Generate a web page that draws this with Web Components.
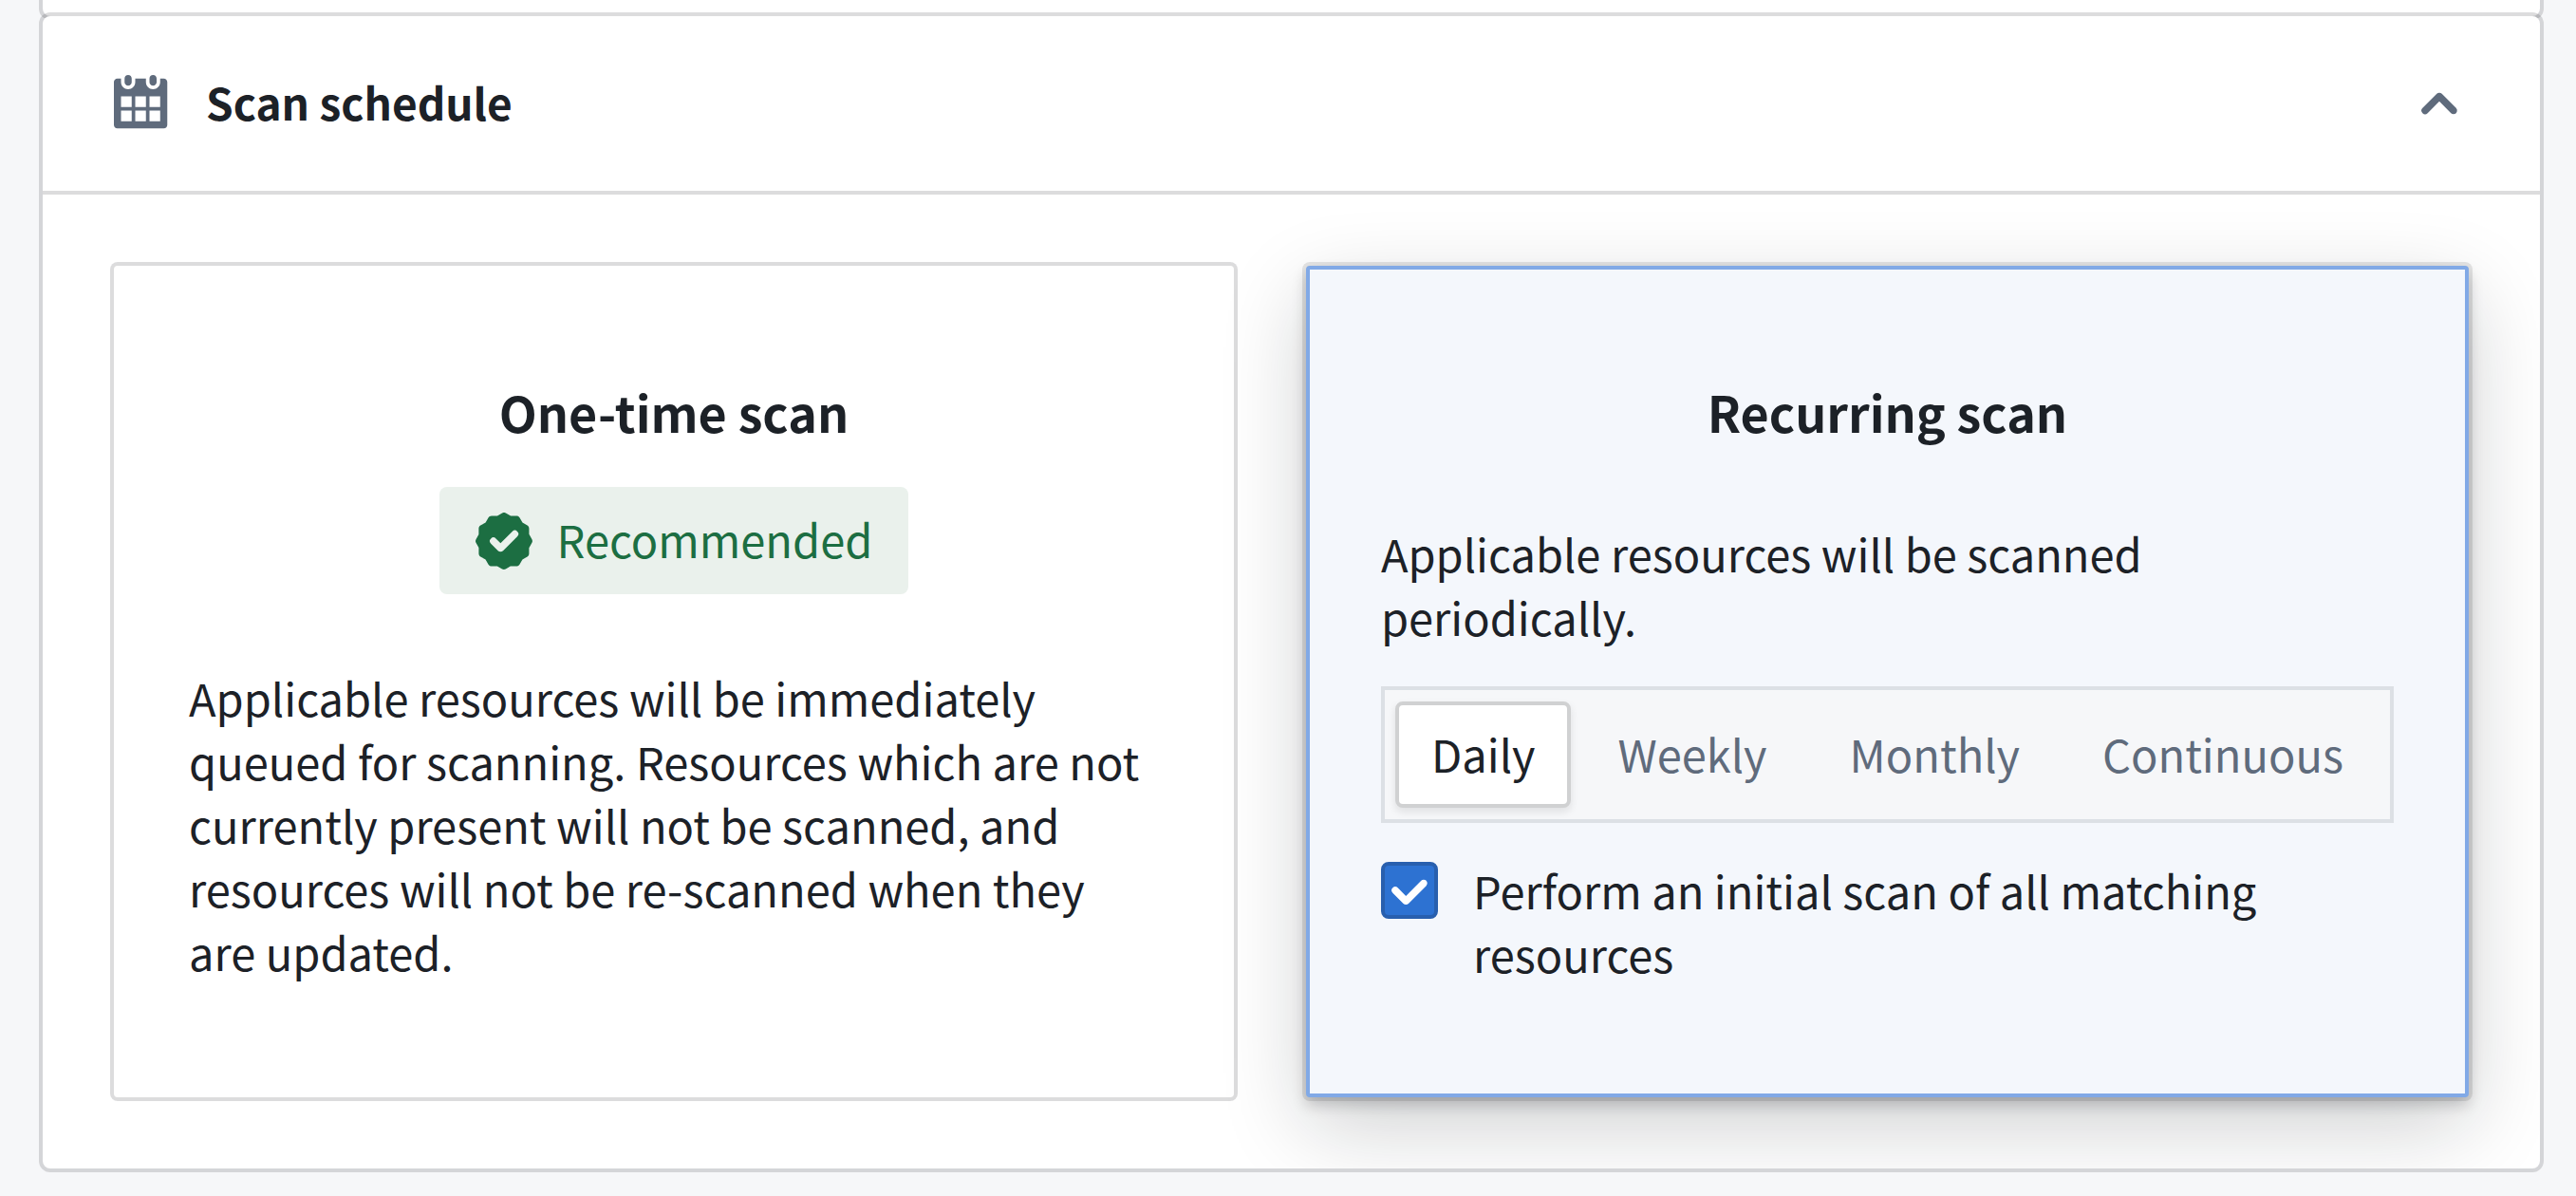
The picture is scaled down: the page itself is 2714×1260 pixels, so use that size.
<!DOCTYPE html>
<html lang="en">
<head>
<meta charset="utf-8">
<title>Scan schedule</title>
<style>
:root{
  --font:"Noto Sans CJK JP","Noto Sans CJK SC",sans-serif;
  --text:#1c2127;--muted:#5f6b7c;--bg:#f6f7f9;
  --size-body:47px;--size-section:46px;--size-title:52px;--line:67px;
  --ring:0 0 0 4px rgba(17,20,24,0.15);
}
html{background:var(--bg)}
body{margin:0;padding:0 38px 25px 45px;font-family:var(--font);font-size:var(--size-body);line-height:var(--line);color:var(--text)}
</style>
</head>
<body>

<form-panel></form-panel>

<collapse-section heading="Scan schedule">
  <option-card heading="One-time scan">
    <recommended-tag slot="tag">Recommended</recommended-tag>
    Applicable resources will be immediately queued for scanning. Resources which are not currently present will not be scanned, and resources will not be re-scanned when they are updated.
  </option-card>
  <option-card heading="Recurring scan" selected>
    Applicable resources will be scanned periodically.
    <segmented-control slot="controls" options="Daily,Weekly,Monthly,Continuous" value="Daily"></segmented-control>
    <check-field slot="controls">Perform an initial scan of all matching resources</check-field>
  </option-card>
</collapse-section>

<script>
const RESET = '*,*::before,*::after{box-sizing:border-box;margin:0;padding:0}';

// Tail of the panel that sits above the schedule section
class FormPanel extends HTMLElement {
  constructor() {
    super();
    this.attachShadow({ mode: 'open' });
  }

  connectedCallback() {
    this.shadowRoot.innerHTML = `
      <style>
:host{display:block;min-height:17px;background:#fff;border-radius:0 0 8px 8px;box-shadow:var(--ring)}
      </style>
      <slot></slot>
    `;
  }
}

class CollapseSection extends HTMLElement {
  constructor() {
    super();
    this.attachShadow({ mode: 'open' });
  }

  connectedCallback() {
    this.shadowRoot.innerHTML = `
      <style>
${RESET}
:host{display:block;background:#fff;border-radius:8px;box-shadow:var(--ring)}
.header{
  display:flex;align-items:center;justify-content:space-between;width:100%;
  padding:57px 76px 57px 75px;border:0;border-bottom:4px solid #dcdcdd;
  background:none;font:inherit;color:inherit;text-align:left;cursor:pointer;
}
.label{display:flex;align-items:center;gap:37px}
h2{padding-bottom:3px;font-size:var(--size-section);font-weight:700;line-height:var(--line)}
svg{display:block;width:60px;height:60px;fill:var(--muted)}
.body{display:grid;grid-template-columns:1180fr 1225fr;gap:76px;padding:75px;overflow:hidden;border-radius:0 0 8px 8px}
.body[hidden]{display:none}
      </style>
      <button class="header" type="button" aria-expanded="true" aria-controls="body">
        <span class="label">
          <svg viewBox="0 0 16 16" aria-hidden="true"><path fill-rule="evenodd" d="M11 3c.6 0 1-.5 1-1V1c0-.6-.4-1-1-1s-1 .4-1 1v1c0 .5.4 1 1 1zm3-2h-1v1c0 1.1-.9 2-2 2s-2-.9-2-2V1H6v1c0 1.1-.9 2-2 2s-2-.9-2-2V1H1c-.6 0-1 .5-1 1v12c0 .6.4 1 1 1h13c.6 0 1-.4 1-1V2c0-.6-.5-1-1-1zM5 13H2v-3h3v3zm0-4H2V6h3v3zm4 4H6v-3h3v3zm0-4H6V6h3v3zm4 4h-3v-3h3v3zm0-4h-3V6h3v3zM4 3c.6 0 1-.5 1-1V1c0-.6-.4-1-1-1S3 .4 3 1v1c0 .5.4 1 1 1z"/></svg>
          <h2>${this.getAttribute('heading')}</h2>
        </span>
        <svg viewBox="0 0 16 16" aria-hidden="true"><path d="M12.71 9.29l-4-4C8.53 5.11 8.28 5 8 5s-.53.11-.71.29l-4 4a1.003 1.003 0 001.42 1.42L8 7.41l3.29 3.29c.18.19.43.3.71.3a1.003 1.003 0 00.71-1.71z"/></svg>
      </button>
      <div class="body" id="body"><slot></slot></div>
    `;

    const header = this.shadowRoot.querySelector('.header');
    const body = this.shadowRoot.querySelector('.body');
    header.addEventListener('click', () => {
      body.hidden = !body.hidden;
      header.setAttribute('aria-expanded', String(!body.hidden));
    });
  }
}

class OptionCard extends HTMLElement {
  constructor() {
    super();
    this.attachShadow({ mode: 'open' });
  }

  connectedCallback() {
    this.shadowRoot.innerHTML = `
      <style>
${RESET}
:host{
  display:flex;flex-direction:column;padding:110px 75px 114px;
  border:4px solid transparent;border-radius:4px;box-shadow:var(--ring);
}
:host([selected]){
  background:#f4f7fc;border-color:#81a9e6;
  box-shadow:0 0 0 4px rgba(17,20,24,0.1),0 8px 15px rgba(17,20,24,0.2),0 30px 90px rgba(17,20,24,0.2);
}
h3{font-size:var(--size-title);font-weight:700;line-height:80px;text-align:center}
.tag{display:flex;justify-content:center;margin-top:39px}
:host([selected]) .tag{display:none}
.text{margin-top:75px}
.controls{display:flex;flex-direction:column;gap:37px;margin-top:40px}
:host(:not([selected])) .controls{display:none}
      </style>
      <h3>${this.getAttribute('heading')}</h3>
      <div class="tag"><slot name="tag"></slot></div>
      <p class="text"><slot></slot></p>
      <div class="controls"><slot name="controls"></slot></div>
    `;
  }
}

class RecommendedTag extends HTMLElement {
  constructor() {
    super();
    this.attachShadow({ mode: 'open' });
  }

  connectedCallback() {
    this.shadowRoot.innerHTML = `
      <style>
:host{
  display:inline-flex;align-items:center;gap:26px;height:113px;padding:0 38px;box-sizing:border-box;
  border-radius:8px;background:#eaf1ec;color:#1c6e42;
}
svg{display:block;width:60px;height:60px;fill:currentColor}
span{padding-bottom:4px}
      </style>
      <svg viewBox="0 0 16 16" aria-hidden="true"><path d="M15.86 7.5l-.81-1.42V4.5c0-.36-.19-.68-.49-.87l-1.37-.8-.81-1.41c-.19-.31-.51-.49-.86-.49H9.89L8.5.14a.948.948 0 00-1 0L6.13.93H4.5c-.36 0-.68.19-.87.49l-.8 1.37-1.44.83c-.3.19-.49.51-.49.87v1.65L.13 7.5c-.17.31-.17.68 0 .99l.78 1.38v1.65c0 .36.19.68.49.87l1.42.81.8 1.37c.19.31.51.49.87.49H6.1l1.38.8c.31.17.68.17.99 0l1.35-.8h1.68c.36 0 .68-.19.87-.49l.81-1.37 1.37-.8c.31-.19.49-.51.49-.87V9.93l.81-1.44c.17-.31.17-.68.01-.99zm-4.12-.77l-4 3.99c-.18.18-.43.29-.71.29s-.53-.11-.71-.29l-2-1.99a1.003 1.003 0 011.42-1.42l1.29 1.29 3.29-3.29a1.003 1.003 0 011.42 1.42z"/></svg>
      <span><slot></slot></span>
    `;
  }
}

class SegmentedControl extends HTMLElement {
  constructor() {
    super();
    this.attachShadow({ mode: 'open' });
  }

  connectedCallback() {
    const value = this.getAttribute('value');
    const buttons = this.getAttribute('options').split(',').map(option =>
      `<button type="button" aria-pressed="${option === value}">${option}</button>`
    ).join('');

    this.shadowRoot.innerHTML = `
      <style>
:host{display:flex;gap:11px;padding:12px 11px;border:4px solid #dce0e5;background:var(--bg)}
button{
  height:112px;margin:0;padding:0 34px 4px;border:4px solid transparent;border-radius:8px;
  background:none;font:inherit;color:var(--muted);cursor:pointer;
}
button[aria-pressed="true"]{
  background:#fff;border-color:#d0d1d2;color:var(--text);
  box-shadow:0 4px 8px rgba(17,20,24,0.1);
}
      </style>
      ${buttons}
    `;

    this.shadowRoot.addEventListener('click', e => {
      if (!e.target.matches('button')) return;
      this.shadowRoot.querySelectorAll('button').forEach(b =>
        b.setAttribute('aria-pressed', String(b === e.target)));
    });
  }
}

class CheckField extends HTMLElement {
  constructor() {
    super();
    this.attachShadow({ mode: 'open' });
  }

  connectedCallback() {
    this.shadowRoot.innerHTML = `
      <style>
:host{display:block}
label{display:flex;align-items:flex-start;gap:37px;cursor:pointer}
.box{display:grid;flex:none;margin-top:4px}
.box > *{grid-area:1/1;width:60px;height:60px;margin:0}
input{appearance:none;border:4px solid #c5cbd3;border-radius:8px;background:#fff;cursor:pointer}
input:checked{background:#2d72d2;border-color:#285fae}
svg{display:block;fill:#fff;pointer-events:none}
      </style>
      <label for="check">
        <span class="box">
          <input type="checkbox" id="check" checked>
          <svg viewBox="0 0 16 16" aria-hidden="true"><path d="M12 5c-.28 0-.53.11-.71.29L7 9.59l-2.29-2.3a1.003 1.003 0 00-1.42 1.42l3 3c.18.18.43.29.71.29s.53-.11.71-.29l5-5A1.003 1.003 0 0012 5z"/></svg>
        </span>
        <span><slot></slot></span>
      </label>
    `;
  }
}

customElements.define('form-panel', FormPanel);
customElements.define('collapse-section', CollapseSection);
customElements.define('option-card', OptionCard);
customElements.define('recommended-tag', RecommendedTag);
customElements.define('segmented-control', SegmentedControl);
customElements.define('check-field', CheckField);
</script>
</body>
</html>
